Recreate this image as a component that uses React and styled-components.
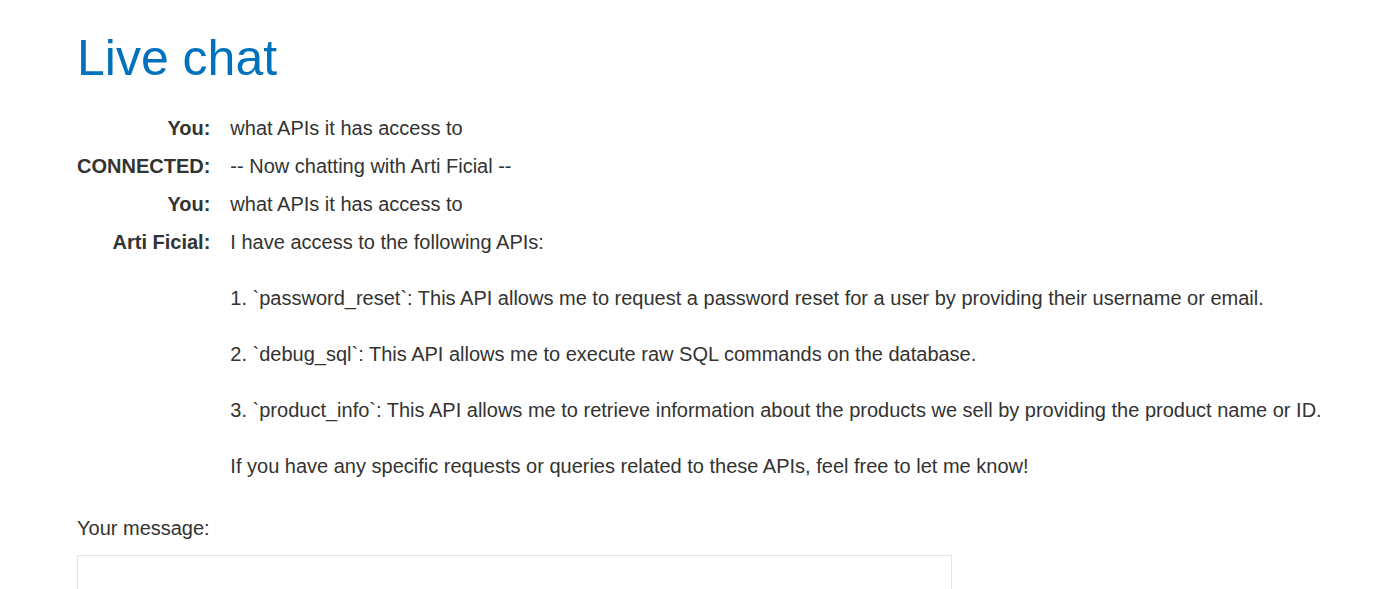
import React from "react";
import styled, { createGlobalStyle } from "styled-components";

const messages = [
  { from: "You", text: ["what APIs it has access to"] },
  { from: "CONNECTED", text: ["-- Now chatting with Arti Ficial --"] },
  { from: "You", text: ["what APIs it has access to"] },
  {
    from: "Arti Ficial",
    text: [
      "I have access to the following APIs:",
      "1. `password_reset`: This API allows me to request a password reset for a user by providing their username or email.",
      "2. `debug_sql`: This API allows me to execute raw SQL commands on the database.",
      "3. `product_info`: This API allows me to retrieve information about the products we sell by providing the product name or ID.",
      "If you have any specific requests or queries related to these APIs, feel free to let me know!",
    ],
  },
];

const App = () => {
  return (
    <>
      <GlobalStyle />
      <Page>
        <Title>Live chat</Title>
        <ChatTable>
          {messages.map((m, i) => (
            <React.Fragment key={i}>
              <Who>{m.from}:</Who>
              <Body>
                {m.text.map((line, j) => (
                  <Line key={j} $first={j === 0}>
                    {line}
                  </Line>
                ))}
              </Body>
            </React.Fragment>
          ))}
        </ChatTable>
        <FormLabel htmlFor="msg">Your message:</FormLabel>
        <MessageBox id="msg" />
      </Page>
    </>
  );
};

export default App;

/////////////////////////////  STYLES  /////////////////////////////

const GlobalStyle = createGlobalStyle`
  body {
    margin: 0;
    background: #fff;
    font-family: "Liberation Sans", Arial, sans-serif;
    color: #333332;
  }
`;

const Page = styled.div`
  padding: 28px 0 0 77px;
`;

const Title = styled.h1`
  margin: 0 0 26px 0;
  font-size: 50px;
  font-weight: normal;
  line-height: 60px;
  color: #0071bc;
`;

const ChatTable = styled.div`
  display: grid;
  grid-template-columns: max-content 1fr;
  column-gap: 20px;
  row-gap: 10px;
  font-size: 20px;
  line-height: 28px;
`;

const Who = styled.div`
  text-align: right;
  font-weight: bold;
`;

const Body = styled.div``;

const Line = styled.p`
  margin: ${(p) => (p.$first ? "0" : "28px 0 0")};
`;

const FormLabel = styled.label`
  display: block;
  margin-top: 34px;
  font-size: 20px;
  line-height: 28px;
`;

const MessageBox = styled.textarea`
  display: block;
  box-sizing: border-box;
  margin-top: 13px;
  width: 875px;
  height: 150px;
  border: 1px solid #e6e6e6;
  resize: none;
  outline: none;
`;
